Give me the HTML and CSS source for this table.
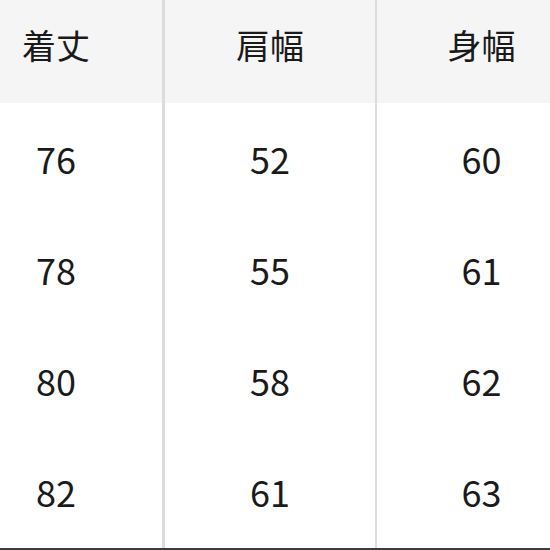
FILE: index.html
```html
<!DOCTYPE html>
<html lang="ja">
<head>
<meta charset="utf-8">
<link rel="stylesheet" href="styles.css">
</head>
<body>
<div class="table">
  <div class="col c1">
    <div class="cell head">着丈</div>
    <div class="cell">76</div>
    <div class="cell">78</div>
    <div class="cell">80</div>
    <div class="cell">82</div>
  </div>
  <div class="divider"></div>
  <div class="col c2">
    <div class="cell head">肩幅</div>
    <div class="cell">52</div>
    <div class="cell">55</div>
    <div class="cell">58</div>
    <div class="cell">61</div>
  </div>
  <div class="divider d2"></div>
  <div class="col c3">
    <div class="cell head">身幅</div>
    <div class="cell">60</div>
    <div class="cell">61</div>
    <div class="cell">62</div>
    <div class="cell">63</div>
  </div>
</div>
</body>
</html>
```

FILE: styles.css
```css
html, body {
  margin: 0;
  padding: 0;
  background: #fff;
}
.table {
  width: 550px;
  height: 550px;
  display: grid;
  grid-template-columns: 162px 3px 210px 2px 173px;
  border-bottom: 2px solid #3c3c3c;
  box-sizing: border-box;
  overflow: hidden;
  font-family: "Noto Sans CJK JP", "Noto Sans", sans-serif;
  color: #1a1a1a;
}
.col {
  display: grid;
  grid-template-rows: 103px repeat(4, 111px);
}
.divider {
  background: #dcdcdc;
}
.cell {
  display: flex;
  align-items: center;
  justify-content: center;
  font-size: 36px;
  font-weight: 400;
  line-height: 1;
  padding-bottom: 2px;
}
.head {
  background: #f5f5f5;
  font-size: 34px;
  padding-bottom: 14px;
}
.c1 .cell {
  padding-right: 50px;
}
.c3 .cell {
  padding-left: 36px;
}
```
